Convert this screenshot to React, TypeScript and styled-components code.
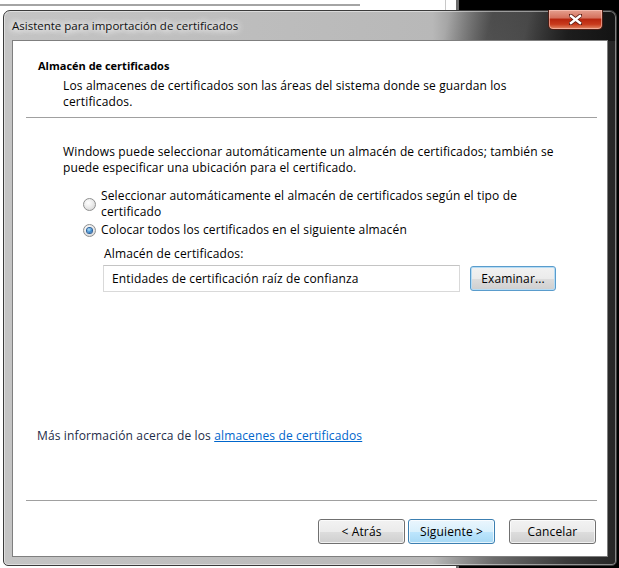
import styled, { createGlobalStyle } from "styled-components";

const GlobalStyle = createGlobalStyle`
  html, body {
    margin: 0;
    padding: 0;
  }
  body {
    font-family: "Open Sans", "Noto Sans", "DejaVu Sans", sans-serif;
    font-size: 12px;
    letter-spacing: 0.14px;
    color: #000;
  }
  * {
    box-sizing: border-box;
  }
`;

const Desktop = styled.div`
  width: 619px;
  height: 568px;
  overflow: hidden;
  padding: 10px 2px 2px 3px;
  background:
    linear-gradient(#a4a4a4, #a4a4a4) 0 4px / 360px 2px no-repeat,
    linear-gradient(#c8c8c8, #c8c8c8) 445px 0 / 1px 10px no-repeat,
    linear-gradient(to right, #ffffff 456px, #6a6a6a 456px, #6a6a6a 459px, #000 459px);
`;

const Window = styled.div`
  width: 614px;
  height: 556px;
  display: flex;
  flex-direction: column;
  border: 1px solid #3b3b3b;
  border-radius: 7px 7px 5px 5px;
  background:
    linear-gradient(104deg, transparent 0%, transparent 72%, rgba(0, 0, 0, 0.3) 79%, rgba(0, 0, 0, 0.15) 85%, rgba(0, 0, 0, 0.5) 92%) 0 0 / 100% 30px no-repeat,
    linear-gradient(to right, #c4c4c4 0%, #b8b8b8 70%, #6c6c6c 80%, #3a3a3a 92%, #262626 100%);
  box-shadow: inset 0 0 0 1px rgba(255, 255, 255, 0.45);
`;

const TitleBar = styled.div`
  height: 29px;
  display: flex;
  align-items: flex-start;
  justify-content: space-between;
  padding-left: 8px;
  padding-right: 13px;
`;

const Title = styled.div`
  font-size: 11.5px;
  letter-spacing: 0;
  line-height: 29px;
  color: #111;
  text-shadow: 0 0 6px #fff, 0 0 8px #fff, 0 0 10px rgba(255, 255, 255, 0.8);
`;

const CloseButton = styled.div`
  width: 55px;
  height: 20px;
  margin-top: -1px;
  display: flex;
  align-items: center;
  justify-content: center;
  border: 1px solid #4a1d14;
  border-top: none;
  border-radius: 0 0 5px 5px;
  background: linear-gradient(#e5a08f 0%, #d5735f 40%, #b8270f 50%, #c83a1c 75%, #e38a66 100%);
  box-shadow: inset 0 0 0 1px rgba(255, 210, 200, 0.55);
`;

const Client = styled.div`
  flex: 1;
  margin: 0 8px 8px 8px;
  display: flex;
  flex-direction: column;
  background: #fff;
  border: 1px solid #7f7f7f;
`;

const Header = styled.div`
  padding: 17px 0 0 25px;
`;

const HeaderTitle = styled.div`
  font-weight: bold;
  font-size: 11px;
  letter-spacing: 0;
  line-height: 16px;
`;

const HeaderText = styled.div`
  margin: 4px 0 0 25px;
  line-height: 16px;
`;

const Separator = styled.div<{ $top: number }>`
  height: 1px;
  margin: ${({ $top }) => $top}px 10px 0 13px;
  background: #a0a0a0;
`;

const Body = styled.div`
  flex: 1;
  padding: 26px 20px 0 50px;
`;

const Paragraph = styled.div`
  line-height: 16px;
`;

const RadioGroup = styled.div`
  margin: 12px 0 0 20px;
  display: flex;
  flex-direction: column;
  gap: 2px;
`;

const RadioRow = styled.label`
  display: flex;
  align-items: center;
  gap: 5px;
  line-height: 16px;
`;

const RadioCircle = styled.span<{ $checked?: boolean }>`
  flex: none;
  width: 13px;
  height: 13px;
  display: flex;
  align-items: center;
  justify-content: center;
  border-radius: 50%;
  border: 1px solid #8e8f8f;
  background: radial-gradient(circle at 40% 35%, #ffffff 0%, #eeeeee 40%, #cfcfcf 100%);
  &::after {
    content: "";
    display: ${({ $checked }) => ($checked ? "block" : "none")};
    width: 5px;
    height: 5px;
    border-radius: 50%;
    background: radial-gradient(circle at 40% 35%, #b8e6fb 0%, #3c8ccf 55%, #1b4f8f 100%);
    box-shadow: 0 0 0 1px #2c5f99;
  }
`;

const StoreBlock = styled.div`
  margin: 8px 0 0 40px;
`;

const StoreLabel = styled.div`
  line-height: 16px;
  padding-left: 1px;
`;

const StoreRow = styled.div`
  margin-top: 3px;
  display: flex;
  align-items: center;
  gap: 10px;
`;

const StoreInput = styled.div`
  width: 357px;
  height: 27px;
  display: flex;
  align-items: center;
  padding: 0 8px;
  border: 1px solid #d9d9d9;
  border-top-color: #c4c4c4;
  background: #fff;
`;

const Button = styled.button<{ $width?: number; $variant?: "default" | "focus" }>`
  width: ${({ $width }) => $width ?? 87}px;
  height: 25px;
  padding: 0;
  font-family: inherit;
  font-size: 12px;
  letter-spacing: 0.14px;
  color: #000;
  border-radius: 3px;
  border: 1px solid ${({ $variant }) => ($variant === "default" ? "#3c7fb1" : $variant === "focus" ? "#5a9ccc" : "#707070")};
  background: ${({ $variant }) =>
    $variant === "default"
      ? "linear-gradient(#eaf6fd 0%, #d9f0fc 50%, #bee6fd 51%, #a7d9f5 100%)"
      : "linear-gradient(#f2f2f2 0%, #ebebeb 50%, #dddddd 51%, #cfcfcf 100%)"};
  box-shadow: inset 0 0 0 1px ${({ $variant }) => ($variant === "focus" ? "#b5dcf5" : "rgba(255, 255, 255, 0.7)")};
`;

const InfoLine = styled.div`
  padding-left: 24px;
  line-height: 16px;
  color: #1d2c48;
`;

const Link = styled.a`
  color: #0066cc;
  text-decoration: underline;
`;

const ButtonRow = styled.div`
  display: flex;
  justify-content: flex-end;
  gap: 3px;
  padding: 18px 11px 12px 0;
`;

const CancelButton = styled(Button)`
  margin-left: 11px;
`;

export default function App() {
  return (
    <>
      <GlobalStyle />
      <Desktop>
        <Window>
          <TitleBar>
            <Title>Asistente para importación de certificados</Title>
            <CloseButton>
              <svg width="13" height="11" viewBox="0 0 13 11">
                <path
                  d="M1.5 1.5 L11.5 9.5 M11.5 1.5 L1.5 9.5"
                  stroke="#5a1a10"
                  strokeWidth="4"
                  strokeLinecap="square"
                />
                <path
                  d="M2 2 L11 9 M11 2 L2 9"
                  stroke="#ffffff"
                  strokeWidth="2.4"
                  strokeLinecap="square"
                />
              </svg>
            </CloseButton>
          </TitleBar>
          <Client>
            <Header>
              <HeaderTitle>Almacén de certificados</HeaderTitle>
              <HeaderText>
                Los almacenes de certificados son las áreas del sistema donde se guardan los
                <br />
                certificados.
              </HeaderText>
            </Header>
            <Separator $top={7} />
            <Body>
              <Paragraph>
                Windows puede seleccionar automáticamente un almacén de certificados; también se
                <br />
                puede especificar una ubicación para el certificado.
              </Paragraph>
              <RadioGroup>
                <RadioRow>
                  <RadioCircle />
                  <span>
                    Seleccionar automáticamente el almacén de certificados según el tipo de
                    <br />
                    certificado
                  </span>
                </RadioRow>
                <RadioRow>
                  <RadioCircle $checked />
                  <span>Colocar todos los certificados en el siguiente almacén</span>
                </RadioRow>
              </RadioGroup>
              <StoreBlock>
                <StoreLabel>Almacén de certificados:</StoreLabel>
                <StoreRow>
                  <StoreInput>Entidades de certificación raíz de confianza</StoreInput>
                  <Button $width={86} $variant="focus">
                    Examinar...
                  </Button>
                </StoreRow>
              </StoreBlock>
            </Body>
            <InfoLine>
              Más información acerca de los <Link>almacenes de certificados</Link>
            </InfoLine>
            <Separator $top={56} />
            <ButtonRow>
              <Button>&lt; Atrás</Button>
              <Button $variant="default">Siguiente &gt;</Button>
              <CancelButton>Cancelar</CancelButton>
            </ButtonRow>
          </Client>
        </Window>
      </Desktop>
    </>
  );
}
